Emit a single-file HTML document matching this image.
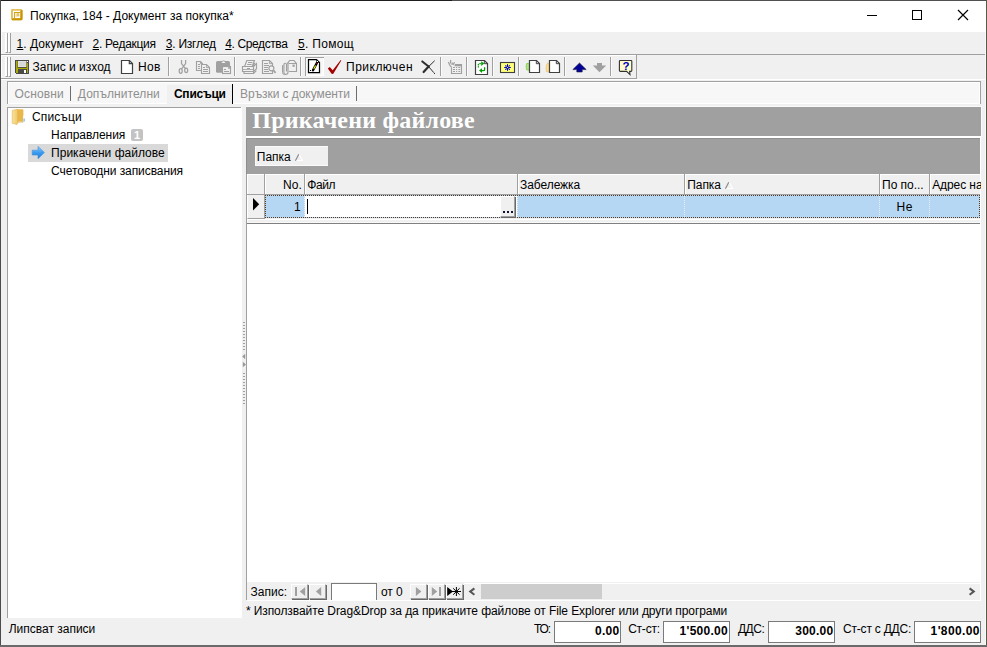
<!DOCTYPE html>
<html lang="bg">
<head>
<meta charset="utf-8">
<title>Покупка, 184 - Документ за покупка*</title>
<style>
html,body{margin:0;padding:0;}
body{width:987px;height:647px;overflow:hidden;position:relative;background:#f0f0f0;font-family:"Liberation Sans",sans-serif;font-size:12px;color:#000;}
.a{position:absolute;box-sizing:border-box;}
.t{position:absolute;white-space:pre;font-family:"Liberation Sans",sans-serif;}
.t u{text-decoration:underline;text-underline-offset:1px;}
svg{position:absolute;overflow:visible;}
.vs{position:absolute;width:1px;top:57px;height:19px;background:#a0a0a0;box-shadow:1px 0 0 #fbfbfb;}
.nb{position:absolute;box-sizing:border-box;top:584px;height:15px;width:17px;background:#f0f0f0;border-top:1px solid #fff;border-left:1px solid #fff;border-right:1px solid #a0a0a0;border-bottom:1px solid #a0a0a0;box-shadow:1px 1px 0 #696969;}
.hc{position:absolute;box-sizing:border-box;top:174px;height:20px;background:#f0f0f0;border-left:1px solid #fff;border-top:1px solid #fff;}
.hs{position:absolute;top:174px;height:21px;width:1px;background:#a0a0a0;}
.tb{position:absolute;box-sizing:border-box;top:621px;height:22px;width:67px;background:#fff;border:1px solid #7a7a7a;}
</style>
</head>
<body>
<!-- ===== window frame ===== -->
<div class="a" id="titlebar" style="left:1px;top:1px;width:985px;height:31px;background:#fff;"></div>
<div class="a" style="left:0;top:0;width:987px;height:1px;background:#505050;"></div>
<div class="a" style="left:0;top:0;width:452px;height:1px;background:#1e1e1e;"></div>
<div class="a" style="left:0;top:0;width:1px;height:647px;background:#4c4c4c;"></div>
<div class="a" style="left:986px;top:0;width:1px;height:647px;background:#5a5a48;"></div>
<div class="a" style="left:0;top:645px;width:987px;height:2px;background:#6a6a6a;"></div>

<!-- app icon -->
<svg style="left:10px;top:8px" width="14" height="14" viewBox="10 8 14 14">
  <rect x="11.2" y="9" width="11.2" height="11.3" rx="1.6" fill="#d9aa2c"/>
  <rect x="12.7" y="10.4" width="7.8" height="8" fill="#fff"/>
  <path d="M12 20.3 H21.2 Q22.5 20.3 22.5 19 V10 L20.4 10.4 V18.3 H12.4 Z" fill="#c79400"/>
  <path d="M11.2 19 V10.4 Q11.2 9 12.6 9 H21.4 L20.4 10.5 H12.8 V18.3 Z" fill="#e4c25c"/>
  <path d="M14 18.3 V12 H20.4 V12.9 H14.9 V18.3 Z" fill="#cf9f1a"/>
  <rect x="15.4" y="13.4" width="3.8" height="3.3" fill="#f0dca0"/>
  <rect x="17" y="13.4" width="2.2" height="2.6" fill="#e3c068"/>
</svg>
<!-- caption buttons -->
<svg style="left:860px;top:5px" width="120" height="22" viewBox="860 5 120 22" shape-rendering="crispEdges">
  <rect x="867" y="15" width="10" height="1" fill="#000"/>
  <rect x="912.5" y="10.5" width="9" height="9" fill="none" stroke="#000" stroke-width="1"/>
</svg>
<svg style="left:957px;top:9px" width="12" height="12" viewBox="0 0 12 12">
  <path d="M1 1 L11 11 M11 1 L1 11" stroke="#000" stroke-width="1.2" fill="none"/>
</svg>

<!-- ===== menu bar ===== -->
<div class="a" style="left:1px;top:32px;width:1px;height:48px;background:#fff;"></div>
<div class="a" style="left:5px;top:33px;width:3px;height:20px;border-left:1px solid #fff;border-right:1px solid #a0a0a0;border-bottom:1px solid #a0a0a0;background:#fafafa;"></div>
<div class="a" style="left:8px;top:33px;width:3px;height:20px;border-left:1px solid #fff;border-right:1px solid #a0a0a0;border-bottom:1px solid #a0a0a0;background:#fafafa;"></div>
<div class="a" style="left:1px;top:54px;width:985px;height:1px;background:#a0a0a0;"></div>
<div class="a" style="left:1px;top:55px;width:635px;height:1px;background:#fff;"></div>

<!-- ===== toolbar ===== -->
<div class="a" style="left:5px;top:57px;width:3px;height:20px;border-left:1px solid #fff;border-right:1px solid #a0a0a0;border-bottom:1px solid #a0a0a0;background:#fafafa;"></div>
<div class="a" style="left:8px;top:57px;width:3px;height:20px;border-left:1px solid #fff;border-right:1px solid #a0a0a0;border-bottom:1px solid #a0a0a0;background:#fafafa;"></div>
<div class="a" style="left:1px;top:78px;width:636px;height:1px;background:#a0a0a0;"></div>
<div class="a" style="left:636px;top:55px;width:1px;height:24px;background:#a0a0a0;"></div>
<div class="a" style="left:1px;top:79px;width:985px;height:1px;background:#fff;"></div>
<div class="vs" style="left:168px"></div>
<div class="vs" style="left:234px"></div>
<div class="vs" style="left:300px"></div>
<div class="vs" style="left:440px"></div>
<div class="vs" style="left:466px"></div>
<div class="vs" style="left:492px"></div>
<div class="vs" style="left:518px"></div>
<div class="vs" style="left:564px"></div>
<div class="vs" style="left:610px"></div>
<!-- toolbar icons: one SVG in page coordinates -->
<svg id="tbicons" style="left:0;top:54px" width="640" height="26" viewBox="0 54 640 26">
 <!-- save (floppy) -->
 <g>
  <rect x="15" y="60" width="14" height="14" fill="#4a4a4a"/>
  <rect x="16" y="61" width="12" height="12" fill="#aaaa00"/>
  <rect x="17.6" y="60.5" width="9.1" height="7.4" fill="#4a4a4a"/>
  <rect x="18" y="61" width="8.3" height="6" fill="#f2f2f2"/>
  <rect x="18.4" y="61.4" width="7.5" height="5.2" fill="#d8d8d8"/>
  <rect x="27" y="61" width="1" height="1" fill="#fff"/>
  <rect x="26.8" y="62" width="1.2" height="1" fill="#4a4a4a"/>
  <rect x="18" y="69" width="9" height="5" fill="#4a4a4a"/>
  <rect x="24" y="70" width="2" height="3" fill="#fff"/>
  <rect x="15" y="73" width="1" height="1" fill="#f0f0f0"/>
 </g>
 <!-- new -->
 <path d="M121.5 60.5 H129.5 L132.5 63.5 V73.5 H121.5 Z" fill="#fff" stroke="#404040" stroke-width="1.2"/>
 <path d="M129.3 60.5 V63.7 H132.5" fill="none" stroke="#404040" stroke-width="1.2"/>
 <!-- cut (disabled) -->
 <g fill="none" stroke="#a0a0a0" stroke-width="1.25">
  <path d="M181.5 60 V63.6 L185.4 68.6 M185.6 60 V63.6 L181.6 68.8"/>
  <ellipse cx="180.7" cy="70.9" rx="1.5" ry="2.4"/>
  <ellipse cx="186.2" cy="70.3" rx="1.5" ry="2.3"/>
 </g>
 <!-- copy (disabled) -->
 <g fill="#f0f0f0" stroke="#a0a0a0" stroke-width="1.15">
  <path d="M196.5 61.5 H200.5 L202.5 63.5 V70.5 H196.5 Z"/>
  <path d="M200.4 61.6 V63.6 H202.4" fill="none" stroke-width="0.9"/>
  <path d="M201.5 64.5 H206.5 L209.5 67.5 V73.5 H201.5 Z"/>
  <path d="M206.4 64.6 V67.6 H209.4" fill="none" stroke-width="0.9"/>
  <path d="M198 64.5 H200 M198 66.5 H200 M198 68.5 H200 M203 67.5 H205 M203 69.5 H208 M203 71.5 H208" stroke-width="1"/>
 </g>
 <!-- paste (disabled) -->
 <rect x="216" y="61" width="14" height="11.8" rx="1.6" fill="#a0a0a0"/>
 <path d="M220 63.6 L222.6 60.4 H224.4 L227 63.6 Z" fill="#a0a0a0"/>
 <path d="M221.4 63 L223 61.2 H224 L225.6 63 Z" fill="#f0f0f0"/>
 <rect x="222.5" y="66.5" width="8" height="7" fill="#f0f0f0" stroke="#a0a0a0" stroke-width="1.15"/>
 <path d="M224 69.5 H226 M224 71.5 H229" stroke="#a0a0a0" stroke-width="1"/>
 <rect x="228" y="67" width="2" height="2" fill="#a0a0a0"/><rect x="228.4" y="67.6" width="1" height="1" fill="#f0f0f0"/>
 <!-- print (disabled) -->
 <g fill="none" stroke="#a0a0a0" stroke-width="1.15">
  <path d="M244.6 66.5 L246.8 60.5 H254.4 L252.2 66.5"/>
  <path d="M248 62.5 H252.4 M247.2 64.5 H251.6" stroke-width="1"/>
  <path d="M242.5 66.5 H253.5 V71.5 H242.5 Z"/>
  <path d="M253.5 66.5 L256.5 63.6 V68.8 L253.5 71.5 M255 62.8 L252.6 65.8 M253.6 73.4 L256.4 70.6"/>
  <path d="M244 71.8 V73.5 H253.5 V71.8"/>
  <path d="M247 68.5 H250" stroke-width="1"/>
  <path d="M243 69.5 H253" stroke-width="0.8"/>
 </g>
 <!-- preview (disabled) -->
 <g fill="none" stroke="#a0a0a0" stroke-width="1.15">
  <path d="M262.5 60.5 H269.5 L272.5 63.5 V73.5 H262.5 Z"/>
  <path d="M269.4 60.6 V63.6 H272.4" stroke-width="0.9"/>
  <path d="M264 63.5 H268 M264 65.5 H269 M264 67.5 H268 M264 69.5 H268 M264 71.5 H269" stroke-width="1"/>
  <circle cx="271.4" cy="68.3" r="2.5" fill="#f0f0f0"/>
  <path d="M273.4 70.4 L275.6 72.8" stroke-width="1.8"/>
 </g>
 <!-- attach (disabled) -->
 <g fill="none" stroke="#a0a0a0" stroke-width="1.15">
  <path d="M287.4 63.6 L289.6 60.5 H294 L296.5 63.4 V71.5 H289"/>
  <path d="M289 63.5 H296.4" stroke-width="1"/>
  <rect x="292.5" y="64.6" width="2.2" height="2.2" fill="#a0a0a0" stroke="none"/>
  <path d="M286.5 71.4 V64.6 Q286.5 63.2 285.2 63.2 Q283.9 63.2 283.9 64.6 V72.2 Q283.9 74.4 285.8 74.4 Q287.9 74.4 288 72.2 V62.6"/>
  <path d="M282.5 65.2 V72.6 Q282.7 74.4 284.6 74.8" stroke-width="1"/>
 </g>
 <!-- pressed button + edit icon -->
 <g shape-rendering="crispEdges">
  <rect x="305" y="57" width="19" height="19" fill="#f8f8f8"/>
  <rect x="305" y="57" width="19" height="1" fill="#a0a0a0"/>
  <rect x="305" y="57" width="1" height="19" fill="#a0a0a0"/>
  <rect x="323" y="58" width="1" height="18" fill="#fff"/>
  <rect x="306" y="75" width="18" height="1" fill="#fff"/>
 </g>
 <path d="M308.5 59.5 H316.5 L319.5 62.5 V72.5 H308.5 Z" fill="#fff" stroke="#000" stroke-width="1.25"/>
 <path d="M316.3 59.8 L319.3 62.8" stroke="#000" stroke-width="1"/>
 <path d="M317.4 62 L313 70.2" stroke="#000" stroke-width="2.4" stroke-linecap="round"/>
 <path d="M315.6 65.4 L313.8 68.8" stroke="#f4f000" stroke-width="1.1"/>
 <path d="M316.9 63 L316.5 63.8" stroke="#c00000" stroke-width="1.3"/>
 <rect x="317" y="61" width="1" height="1" fill="#fff"/><rect x="318" y="63" width="1" height="1" fill="#fff"/>
 <rect x="310" y="70" width="1" height="1" fill="#000"/>
 <path d="M312 70.8 L313.4 70.2" stroke="#000" stroke-width="1"/>
 <!-- check -->
 <path d="M327.8 68.4 L329.8 66.9 L332.7 70.3 L340.7 59.9 L341.3 60.4 L333.3 73.8 L331.8 74 Z" fill="#a40000"/>
 <!-- X -->
 <g stroke="#2e2e2e" fill="none" stroke-linecap="round">
  <path d="M422.3 61.4 L428.6 66.6" stroke-width="2"/>
  <path d="M428.6 66.6 L433.6 72.4" stroke-width="1"/>
  <path d="M434.4 61 L428.6 66.6" stroke-width="1"/>
  <path d="M428.6 66.6 L423.6 72" stroke-width="2.2"/>
 </g>
 <rect x="434" y="73" width="1" height="1" fill="#2e2e2e"/>
 <!-- calendar (disabled) -->
 <g fill="none" stroke="#a0a0a0" stroke-width="1.15">
  <path d="M451.5 67.4 V73.5 H461.5 V64.6 H455"/>
  <path d="M454.6 65.3 H461.5" stroke-width="2"/>
  <path d="M453 67.5 H455 M456 67.5 H457.2 M458.4 67.5 H460.2 M453 69.5 H455 M456 69.5 H457.2 M458.4 69.5 H460.2 M453 71.5 H455 M456 71.5 H457.2 M458.4 71.5 H460.2" stroke-width="1"/>
  <path d="M448.4 62 L450 65.6 L451.8 67.4 M450.6 60 V63.6 M452.8 62.6 L451.6 64.6 M454.6 62.2 L453 65" stroke-width="1.25"/>
 </g>
 <!-- refresh -->
 <path d="M475.5 60.5 H484.5 L487.5 63.5 V74.5 H475.5 Z" fill="#fff" stroke="#404040" stroke-width="1.2"/>
 <path d="M484.3 60.6 V63.7 H487.4" fill="none" stroke="#404040" stroke-width="1"/>
 <g fill="none" stroke="#00a000" stroke-width="1.3">
  <path d="M478.4 67.6 V64.6 Q478.4 63.6 479.6 63.6 H481.6" stroke-dasharray="1.4 0.8"/>
  <path d="M484.6 67.2 V69.4 Q484.6 70.6 483.4 70.6 H481.6"/>
 </g>
 <path d="M481.2 61.2 L484.2 63.6 L481.2 66 Z" fill="#00a000"/>
 <path d="M482 68.2 L479 70.6 L482 73 Z" fill="#00a000"/>
 <!-- yellow star box -->
 <rect x="500.5" y="62.5" width="14" height="10" fill="#ffff78" stroke="#404040" stroke-width="1.1"/>
 <g stroke="#0000c0" stroke-width="1" fill="none">
  <path d="M504.2 67.5 H510.8 M507.5 64.2 V70.8"/>
 </g>
 <g fill="#0000c0">
  <rect x="505.2" y="65.2" width="1.2" height="1.2"/><rect x="508.7" y="65.2" width="1.2" height="1.2"/>
  <rect x="505.2" y="68.7" width="1.2" height="1.2"/><rect x="508.7" y="68.7" width="1.2" height="1.2"/>
  <circle cx="507.5" cy="67.5" r="1.5"/>
 </g>
 <circle cx="507.5" cy="67.5" r="0.6" fill="#fff"/>
 <!-- page + green -->
 <path d="M526.6 63.6 Q525.6 66.5 526.6 69.8 L529.4 70.2 V63.2 Z" fill="#b4e090" stroke="#7fcf40" stroke-width="0.8"/>
 <path d="M529.5 60.5 H536.5 L539.5 63.5 V72.5 H529.5 Z" fill="#fff" stroke="#404040" stroke-width="1.2"/>
 <path d="M536.3 60.6 V63.7 H539.4" fill="none" stroke="#404040" stroke-width="1"/>
 <!-- page + orange -->
 <path d="M546.6 65 Q545.6 68.5 546.4 71.6 L549.4 72 V63.4 L547.6 63 Z" fill="#f8e08a" stroke="#efc080" stroke-width="0.8"/>
 <path d="M549.5 60.5 H556.5 L559.5 63.5 V72.5 H549.5 Z" fill="#fff" stroke="#404040" stroke-width="1.2"/>
 <path d="M556.3 60.6 V63.7 H559.4" fill="none" stroke="#404040" stroke-width="1"/>
 <!-- up arrow -->
 <path d="M579.5 63 L586.2 69.6 H582.2 V72 H576.8 V69.6 H572.8 Z" fill="#000096" stroke="#202040" stroke-width="0.6"/>
 <!-- down arrow (disabled) -->
 <path d="M597 63 H602 V65.6 H606.2 L599.5 72.2 L592.8 65.6 H597 Z" fill="#a0a0a0"/>
 <!-- help -->
 <path d="M620.2 60.5 H631 Q631.8 60.5 631.8 61.3 V70.6 Q631.8 71.4 631 71.4 H629.6 L630 74.6 L626.6 71.4 H620.2 Q619.4 71.4 619.4 70.6 V61.3 Q619.4 60.5 620.2 60.5 Z" fill="#ffffcc" stroke="#303030" stroke-width="1.1"/>
 <text x="622.4" y="70" font-family="'Liberation Sans',sans-serif" font-weight="700" font-size="11.5" fill="#0000c0">?</text>
</svg>


<!-- ===== tab strip ===== -->
<div class="a" style="left:7px;top:81px;width:974px;height:23px;background:#f7f7f7;border-top:1px solid #a0a0a0;border-left:1px solid #a0a0a0;border-right:1px solid #a0a0a0;"></div>
<div class="a" style="left:8px;top:82px;width:972px;height:1px;background:#fff;"></div>
<div class="a" style="left:8px;top:103px;width:972px;height:1px;background:#fff;"></div>
<div class="a" style="left:979px;top:82px;width:1px;height:22px;background:#fff;"></div>
<div class="a" style="left:8px;top:82px;width:1px;height:22px;background:#fff;"></div>
<div class="a" style="left:167px;top:85px;width:65px;height:19px;background:#f0f0f0;"></div>
<div class="a" style="left:232px;top:84px;width:1px;height:20px;background:#000;"></div>
<div class="a" style="left:70px;top:86px;width:1px;height:15px;background:#6d6d6d;"></div>
<div class="a" style="left:356px;top:86px;width:1px;height:15px;background:#6d6d6d;"></div>

<!-- ===== tree panel ===== -->
<div class="a" style="left:7px;top:107px;width:235px;height:511px;background:#fff;border-top:1px solid #a0a0a0;border-left:1px solid #a0a0a0;"></div>
<div class="a" style="left:241px;top:107px;width:1px;height:1px;background:#fff;"></div>
<div class="a" style="left:28px;top:144px;width:140px;height:18px;background:#d9d9d9;"></div>
<div class="a" style="left:131px;top:129px;width:12px;height:12px;background:#c3c3c3;border-radius:2px;"></div>
<span class="t" style="left:134px;top:130px;font-size:11px;line-height:11px;font-weight:700;color:#fff;">1</span>
<!-- folder icon -->
<svg style="left:11px;top:108px" width="16" height="18" viewBox="11 108 16 18">
 <defs>
  <linearGradient id="fg1" x1="0" y1="0" x2="1" y2="0"><stop offset="0" stop-color="#f8e3a0"/><stop offset="1" stop-color="#efc766"/></linearGradient>
  <linearGradient id="ag" x1="0" y1="0" x2="0" y2="1"><stop offset="0" stop-color="#8fd0ff"/><stop offset="0.5" stop-color="#3a9cf0"/><stop offset="1" stop-color="#1f78d8"/></linearGradient>
 </defs>
 <path d="M16.6 109.2 H22.6 Q23.4 109.2 23.4 110 V121.6 H16.6 Z" fill="#e9b84c"/>
 <path d="M23.2 115.6 H24.4 V121.4 H23.2 Z" fill="#fff"/>
 <path d="M23.6 118.6 H24.6 V121.4 H23.6 Z" fill="#4aa8f0"/>
 <path d="M12.2 110.4 L16.8 109.4 Q17.8 109.4 17.8 110.4 V123.4 L16.8 124.6 L12.2 123.2 Z" fill="url(#fg1)" stroke="#dca93f" stroke-width="0.5"/>
 <path d="M17.8 121.6 H23.4 V122.4 H17.8 Z" fill="#d9a53a"/>
</svg>
<!-- current-node arrow -->
<svg style="left:31px;top:145px" width="15" height="15" viewBox="31 145 15 15">
 <path d="M32.2 150.2 H38 V146.4 L44.4 152.5 L38 158.8 V155 H32.2 Z" fill="url(#ag)" stroke="#3b8fe0" stroke-width="0.6"/>
</svg>


<!-- splitter -->
<svg style="left:242px;top:320px" width="5" height="86" viewBox="242 320 5 86" shape-rendering="crispEdges">
 <g fill="#a0a0a0">
 <rect x="243" y="322" width="2" height="1"/><rect x="243" y="325" width="2" height="1"/><rect x="243" y="328" width="2" height="1"/><rect x="243" y="331" width="2" height="1"/><rect x="243" y="334" width="2" height="1"/><rect x="243" y="337" width="2" height="1"/><rect x="243" y="340" width="2" height="1"/><rect x="243" y="343" width="2" height="1"/><rect x="243" y="346" width="2" height="1"/><rect x="243" y="349" width="2" height="1"/>
 <rect x="243" y="373" width="2" height="1"/><rect x="243" y="376" width="2" height="1"/><rect x="243" y="379" width="2" height="1"/><rect x="243" y="382" width="2" height="1"/><rect x="243" y="385" width="2" height="1"/><rect x="243" y="388" width="2" height="1"/><rect x="243" y="391" width="2" height="1"/><rect x="243" y="394" width="2" height="1"/><rect x="243" y="397" width="2" height="1"/><rect x="243" y="400" width="2" height="1"/><rect x="243" y="403" width="2" height="1"/>
 </g>
 <path d="M245.2 353.8 V359.2 L242.2 356.5 Z" fill="#999" shape-rendering="auto"/>
 <path d="M242.8 361.8 V367.2 L246 364.5 Z" fill="#999" shape-rendering="auto"/>
</svg>


<!-- ===== right panel ===== -->
<div class="a" style="left:246px;top:106px;width:736px;height:1px;background:#fafafa;"></div>
<div class="a" style="left:981px;top:106px;width:1px;height:32px;background:#fafafa;"></div>
<div class="a" style="left:985px;top:32px;width:1px;height:613px;background:#f8f8f8;"></div>
<div class="a" style="left:246px;top:107px;width:735px;height:29px;background:#a0a0a0;"></div>
<div class="a" style="left:246px;top:136px;width:735px;height:2px;background:#fff;"></div>
<div class="a" style="left:246px;top:138px;width:734px;height:36px;background:#a0a0a0;border-top:1px solid #8e8e8e;border-left:1px solid #8e8e8e;"></div>
<div class="a" style="left:980px;top:138px;width:1px;height:462px;background:#fff;"></div>
<!-- group chip -->
<div class="a" style="left:255px;top:146px;width:73px;height:20px;background:#f0f0f0;border-left:1px solid #fafafa;border-top:1px solid #fafafa;border-bottom:1px solid #fafafa;"></div>
<svg style="left:293.5px;top:153px" width="10" height="9" viewBox="0 0 10 9"><path d="M5 1 L8.5 7.5 H1.5" stroke="#fff" stroke-width="1.1" fill="none"/><path d="M1.4 7.8 L4.8 1.2" stroke="#8c8c8c" stroke-width="1.2" fill="none"/></svg>

<!-- grid -->
<div class="a" style="left:246px;top:174px;width:1px;height:426px;background:#a0a0a0;"></div>
<div class="a" style="left:247px;top:174px;width:733px;height:50px;background:#f0f0f0;"></div>
<div class="hc" style="left:247px;width:17px;"></div>
<div class="hc" style="left:265px;width:39px;"></div>
<div class="hc" style="left:305px;width:212px;"></div>
<div class="hc" style="left:518px;width:166px;"></div>
<div class="hc" style="left:685px;width:194px;"></div>
<div class="hc" style="left:880px;width:49px;"></div>
<div class="hc" style="left:930px;width:50px;"></div>
<div class="hs" style="left:264px"></div><div class="hs" style="left:304px"></div><div class="hs" style="left:517px"></div>
<div class="hs" style="left:684px"></div><div class="hs" style="left:879px"></div><div class="hs" style="left:929px"></div>
<div class="a" style="left:247px;top:194px;width:733px;height:1px;background:#a0a0a0;"></div>
<svg style="left:724px;top:181px" width="10" height="9" viewBox="0 0 10 9"><path d="M5 1 L8.5 7.5 H1.5" stroke="#fff" stroke-width="1.1" fill="none"/><path d="M1.4 7.8 L4.8 1.2" stroke="#8c8c8c" stroke-width="1.2" fill="none"/></svg>
<!-- data row -->
<div class="a" style="left:247px;top:195px;width:18px;height:24px;background:#f0f0f0;border-left:1px solid #fff;border-right:1px solid #a0a0a0;border-bottom:1px solid #a0a0a0;"></div>
<svg style="left:253px;top:198px" width="7" height="13" viewBox="0 0 7 13"><path d="M0 0 L6.2 6.2 L0 12.4 Z" fill="#000"/></svg>
<div class="a" style="left:265px;top:195px;width:715px;height:23px;background:#b5d7f3;"></div>
<div class="a" style="left:305px;top:196px;width:212px;height:21px;background:#fff;"></div>
<!-- dotted cell separators -->
<div class="a" style="left:304px;top:196px;width:0;height:21px;border-left:1px dotted #e8eef4;"></div>
<div class="a" style="left:517px;top:196px;width:0;height:21px;border-left:1px dotted #e8eef4;"></div>
<div class="a" style="left:684px;top:196px;width:0;height:21px;border-left:1px dotted #e8eef4;"></div>
<div class="a" style="left:879px;top:196px;width:0;height:21px;border-left:1px dotted #e8eef4;"></div>
<div class="a" style="left:929px;top:196px;width:0;height:21px;border-left:1px dotted #e8eef4;"></div>
<!-- focus rect -->
<div class="a" style="left:265px;top:195px;width:715px;height:23px;border:1px dotted #5a3a1e;"></div>
<!-- caret -->
<div class="a" style="left:307px;top:199px;width:1px;height:15px;background:#000;"></div>
<!-- ellipsis button -->
<div class="a" style="left:500px;top:196px;width:15px;height:21px;background:#f0f0f0;border-top:1px solid #fff;border-left:1px solid #fff;border-right:1px solid #a0a0a0;border-bottom:1px solid #a0a0a0;box-shadow:1px 1px 0 #696969;"></div>
<div class="a" style="left:503px;top:211px;width:1.5px;height:2px;background:#101030;"></div>
<div class="a" style="left:507px;top:211px;width:1.5px;height:2px;background:#101030;"></div>
<div class="a" style="left:511px;top:211px;width:1.5px;height:2px;background:#101030;"></div>
<!-- empty area -->
<div class="a" style="left:247px;top:219px;width:733px;height:1px;background:#fff;"></div>
<div class="a" style="left:247px;top:220px;width:1px;height:3px;background:#fff;"></div>
<div class="a" style="left:247px;top:222px;width:733px;height:1px;background:#f8f8f8;"></div>
<div class="a" style="left:247px;top:223px;width:733px;height:359px;background:#fff;border-top:1px solid #808080;"></div>

<!-- navigator -->
<div class="nb" style="left:291px"></div>
<div class="nb" style="left:309px"></div>
<div class="a" style="left:331px;top:583px;width:46px;height:17px;background:#fff;border:1px solid #7a7a7a;border-bottom:none;"></div>
<div class="nb" style="left:410px"></div>
<div class="nb" style="left:428px"></div>
<div class="nb" style="left:446px"></div>
<svg style="left:290px;top:584px" width="176" height="16" viewBox="290 584 176 16">
 <g fill="#a0a0a0">
  <rect x="295" y="587" width="2" height="9"/>
  <path d="M305.2 587 V596 L299.8 591.5 Z"/>
  <path d="M321.2 587 V596 L315.9 591.5 Z"/>
  <path d="M415.9 587 V596 L421.4 591.5 Z"/>
  <path d="M431.8 587 V596 L437.2 591.5 Z"/>
  <rect x="439" y="587" width="2" height="9"/>
 </g>
 <path d="M447.2 587 V596 L453 591.5 Z" fill="#000"/>
 <path d="M451.8 591.5 H461 M456.4 587 V596 M453.2 588.3 L459.6 594.7 M459.6 588.3 L453.2 594.7" stroke="#000" stroke-width="1" fill="none"/>
</svg>

<!-- h-scrollbar -->
<div class="a" style="left:464px;top:583px;width:516px;height:1px;background:#fff;"></div>
<div class="a" style="left:247px;top:600px;width:734px;height:1px;background:#fff;"></div>
<div class="a" style="left:481px;top:584px;width:121px;height:15px;background:#cdcdcd;"></div>
<svg style="left:468px;top:587px" width="8" height="10" viewBox="0 0 8 10"><path d="M6.4 1.4 L2.2 4.6 L6.4 7.8" stroke="#555" stroke-width="2" fill="none"/></svg>
<svg style="left:968px;top:587px" width="8" height="10" viewBox="0 0 8 10"><path d="M1.6 1.4 L5.8 4.6 L1.6 7.8" stroke="#555" stroke-width="2" fill="none"/></svg>

<!-- totals -->
<div class="tb" style="left:554px"></div>
<div class="tb" style="left:663px"></div>
<div class="tb" style="left:768px"></div>
<div class="tb" style="left:914px"></div>

<!-- ===== all text ===== -->
<span class="t" style="left:30.0px;top:10.0px;font-size:12px;line-height:12px;letter-spacing:0.026px;color:#000;">Покупка, 184 - Документ за покупка*</span>
<span class="t" style="left:16.6px;top:38.0px;font-size:12px;line-height:12px;letter-spacing:0.042px;color:#000;"><u>1</u>. Документ</span>
<span class="t" style="left:92.6px;top:38.0px;font-size:12px;line-height:12px;letter-spacing:-0.283px;color:#000;"><u>2</u>. Редакция</span>
<span class="t" style="left:165.8px;top:38.0px;font-size:12px;line-height:12px;letter-spacing:-0.237px;color:#000;"><u>3</u>. Изглед</span>
<span class="t" style="left:225.3px;top:38.0px;font-size:12px;line-height:12px;letter-spacing:-0.392px;color:#000;"><u>4</u>. Средства</span>
<span class="t" style="left:297.9px;top:38.0px;font-size:12px;line-height:12px;letter-spacing:0.323px;color:#000;"><u>5</u>. Помощ</span>
<span class="t" style="left:32.6px;top:61.0px;font-size:12px;line-height:12px;letter-spacing:0.001px;color:#000;">Запис и изход</span>
<span class="t" style="left:137.9px;top:61.0px;font-size:12px;line-height:12px;letter-spacing:0.391px;color:#000;">Нов</span>
<span class="t" style="left:346.1px;top:61.0px;font-size:12px;line-height:12px;letter-spacing:0.477px;color:#000;">Приключен</span>
<span class="t" style="left:14.6px;top:88.0px;font-size:12px;line-height:12px;letter-spacing:0.109px;color:#8f8f8f;">Основни</span>
<span class="t" style="left:77.8px;top:88.0px;font-size:12px;line-height:12px;letter-spacing:0.070px;color:#8f8f8f;">Допълнителни</span>
<span class="t" style="left:173.9px;top:88.0px;font-size:12px;line-height:12px;letter-spacing:-0.202px;color:#000;font-weight:700;">Списъци</span>
<span class="t" style="left:240.1px;top:88.0px;font-size:12px;line-height:12px;letter-spacing:-0.064px;color:#8f8f8f;">Връзки с документи</span>
<span class="t" style="left:32.0px;top:111.0px;font-size:12px;line-height:12px;letter-spacing:0.108px;color:#000;">Списъци</span>
<span class="t" style="left:51.1px;top:129.0px;font-size:12px;line-height:12px;letter-spacing:-0.060px;color:#000;">Направления</span>
<span class="t" style="left:51.1px;top:147.0px;font-size:12px;line-height:12px;letter-spacing:0.006px;color:#000;">Прикачени файлове</span>
<span class="t" style="left:51.1px;top:165.0px;font-size:12px;line-height:12px;letter-spacing:-0.077px;color:#000;">Счетоводни записвания</span>
<span class="t" style="left:252.3px;top:107.5px;font-size:24px;line-height:24px;letter-spacing:0.199px;color:#fff;font-weight:700;font-family:'Liberation Serif',serif;">Прикачени файлове</span>
<span class="t" style="left:256.8px;top:151.0px;font-size:12px;line-height:12px;letter-spacing:-0.046px;color:#000;">Папка</span>
<span class="t" style="left:283.1px;top:179.0px;font-size:12px;line-height:12px;letter-spacing:0.006px;color:#000;">No.</span>
<span class="t" style="left:307.2px;top:179.0px;font-size:12px;line-height:12px;letter-spacing:-0.372px;color:#000;">Файл</span>
<span class="t" style="left:520.1px;top:179.0px;font-size:12px;line-height:12px;letter-spacing:-0.075px;color:#000;">Забележка</span>
<span class="t" style="left:687.3px;top:179.0px;font-size:12px;line-height:12px;letter-spacing:-0.096px;color:#000;">Папка</span>
<span class="t" style="left:882.1px;top:179.0px;font-size:12px;line-height:12px;letter-spacing:-0.045px;color:#000;">По по...</span>
<span class="t" style="left:932.2px;top:179.0px;font-size:12px;line-height:12px;letter-spacing:-0.086px;color:#000;width:48.5px;overflow:hidden;">Адрес на</span>
<span class="t" style="left:294.1px;top:201.0px;font-size:12px;line-height:12px;letter-spacing:0.000px;color:#000;">1</span>
<span class="t" style="left:896.6px;top:201.0px;font-size:12px;line-height:12px;letter-spacing:0.456px;color:#000;">Не</span>
<span class="t" style="left:250.6px;top:586.0px;font-size:12px;line-height:12px;letter-spacing:-0.014px;color:#000;">Запис:</span>
<span class="t" style="left:381.1px;top:586.0px;font-size:12px;line-height:12px;letter-spacing:-0.141px;color:#000;">от 0</span>
<span class="t" style="left:245.9px;top:605.0px;font-size:12px;line-height:12px;letter-spacing:-0.080px;color:#000;">* Използвайте Drag&amp;Drop за да прикачите файлове от File Explorer или други програми</span>
<span class="t" style="left:8.7px;top:623.0px;font-size:12px;line-height:12px;letter-spacing:-0.003px;color:#000;">Липсват записи</span>
<span class="t" style="left:533.9px;top:622.5px;font-size:12px;line-height:12px;letter-spacing:-1.134px;color:#000;">ТО:</span>
<span class="t" style="left:628.2px;top:622.5px;font-size:12px;line-height:12px;letter-spacing:-0.240px;color:#000;">Ст-ст:</span>
<span class="t" style="left:737.9px;top:622.5px;font-size:12px;line-height:12px;letter-spacing:-0.422px;color:#000;">ДДС:</span>
<span class="t" style="left:843.1px;top:622.5px;font-size:12px;line-height:12px;letter-spacing:-0.216px;color:#000;">Ст-ст с ДДС:</span>
<span class="t" style="left:595.0px;top:625.0px;font-size:12px;line-height:12px;letter-spacing:0.247px;color:#000;font-weight:700;">0.00</span>
<span class="t" style="left:679.6px;top:625.0px;font-size:12px;line-height:12px;letter-spacing:0.252px;color:#000;font-weight:700;">1&#x27;500.00</span>
<span class="t" style="left:795.3px;top:625.0px;font-size:12px;line-height:12px;letter-spacing:0.219px;color:#000;font-weight:700;">300.00</span>
<span class="t" style="left:930.6px;top:625.0px;font-size:12px;line-height:12px;letter-spacing:0.367px;color:#000;font-weight:700;">1&#x27;800.00</span>
</body>
</html>
